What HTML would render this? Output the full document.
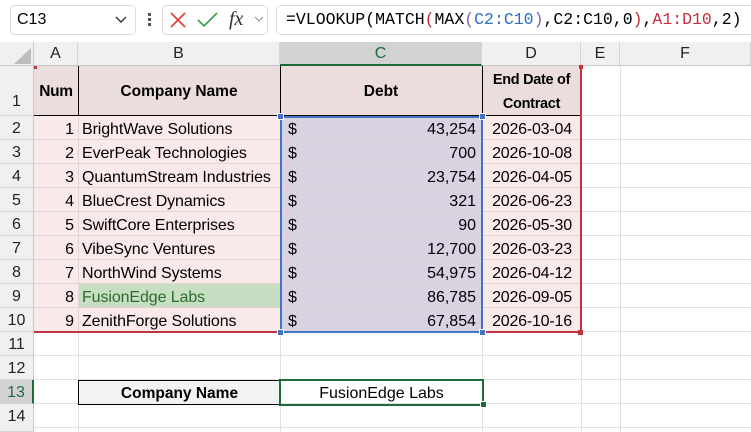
<!DOCTYPE html>
<html><head><meta charset="utf-8"><style>
*{margin:0;padding:0;box-sizing:border-box}
body{width:751px;height:432px;background:#fff;position:relative;overflow:hidden;font-family:"Liberation Sans",sans-serif;font-size:16px;color:#000}
.a{position:absolute}
.rh{position:absolute;left:0;width:34px;background:#f0f0f0;text-align:center;color:#222;font-size:16px;border-bottom:1px solid #d4d4d4;border-right:1px solid #c8c8c8}
.ch{position:absolute;top:42px;height:24px;line-height:24px;background:#f0f0f0;text-align:center;font-size:16px;border-right:1px solid #d4d4d4;border-bottom:1px solid #c8c8c8;color:#222}
.gl{position:absolute;background:#e1e1e1}
</style></head><body>
<div class="a" style="left:10px;top:5px;width:126px;height:30px;border:1px solid #dcdcdc;border-radius:5px"></div>
<div class="a" style="left:17px;top:11px;font-size:16px">C13</div>
<svg class="a" style="left:115px;top:16px" width="12" height="8"><path d="M1 1 L6 6 L11 1" stroke="#333" fill="none" stroke-width="1.4"/></svg>
<div class="a" style="left:148px;top:13px;width:3px;height:3px;background:#555"></div>
<div class="a" style="left:148px;top:18px;width:3px;height:3px;background:#555"></div>
<div class="a" style="left:148px;top:23px;width:3px;height:3px;background:#555"></div>
<div class="a" style="left:162px;top:5px;width:106px;height:30px;border:1px solid #dcdcdc;border-radius:5px"></div>
<svg class="a" style="left:170px;top:12px" width="16" height="16"><path d="M1 1 L15 15 M15 1 L1 15" stroke="#e03a3a" stroke-width="1.6"/></svg>
<svg class="a" style="left:197px;top:12px" width="22" height="16"><path d="M1 8 L7 14 L20 1" stroke="#2fa043" fill="none" stroke-width="1.6"/></svg>
<div class="a" style="left:229px;top:8px;font-family:'Liberation Serif',serif;font-style:italic;font-size:20px;color:#333">fx</div>
<svg class="a" style="left:254px;top:16px" width="10" height="7"><path d="M1 1 L5 5 L9 1" stroke="#999" fill="none" stroke-width="1.2"/></svg>
<div class="a" style="left:276px;top:5px;width:480px;height:30px;border:1px solid #dcdcdc;border-radius:5px"></div>
<div class="a" style="left:286px;top:10px;font-family:'Liberation Mono',monospace;font-size:16.5px;color:#000">=VLOOKUP(MATCH<span style="color:#c03030">(</span>MAX<span style="color:#8a5cc0">(</span><span style="color:#2e6fc4">C2:C10</span><span style="color:#8a5cc0">)</span>,C2:C10,0<span style="color:#c03030">)</span>,<span style="color:#c83040">A1:D10</span>,2)</div>
<div class="a" style="left:0;top:42px;width:34px;height:24px;background:#f0f0f0;border-right:1px solid #c8c8c8;border-bottom:1px solid #c8c8c8"></div>
<svg class="a" style="left:14px;top:48px" width="18" height="16"><path d="M17 0 L17 16 L0 16 Z" fill="#bdbdbd"/></svg>
<div class="ch" style="left:34px;width:44px">A</div>
<div class="ch" style="left:78px;width:202px">B</div>
<div class="ch" style="left:280px;width:202px;background:#d2d2d2;color:#1e6b3a;border-bottom:2px solid #1e6b3a">C</div>
<div class="ch" style="left:482px;width:99px">D</div>
<div class="ch" style="left:581px;width:39px">E</div>
<div class="ch" style="left:620px;width:131px">F</div>
<div class="rh" style="top:66px;height:50px;line-height:72px">1</div>
<div class="rh" style="top:116px;height:24px;line-height:26px">2</div>
<div class="rh" style="top:140px;height:24px;line-height:26px">3</div>
<div class="rh" style="top:164px;height:24px;line-height:26px">4</div>
<div class="rh" style="top:188px;height:24px;line-height:26px">5</div>
<div class="rh" style="top:212px;height:24px;line-height:26px">6</div>
<div class="rh" style="top:236px;height:24px;line-height:26px">7</div>
<div class="rh" style="top:260px;height:24px;line-height:26px">8</div>
<div class="rh" style="top:284px;height:24px;line-height:26px">9</div>
<div class="rh" style="top:308px;height:24px;line-height:26px">10</div>
<div class="rh" style="top:332px;height:24px;line-height:26px">11</div>
<div class="rh" style="top:356px;height:24px;line-height:26px">12</div>
<div class="rh" style="top:380px;height:24px;line-height:26px;background:#d2d2d2;color:#1e6b3a;border-right:2px solid #1e6b3a">13</div>
<div class="rh" style="top:404px;height:28px;line-height:26px">14</div>
<div class="gl" style="left:581px;top:66px;width:1px;height:366px"></div>
<div class="gl" style="left:620px;top:66px;width:1px;height:366px"></div>
<div class="gl" style="left:78px;top:332px;width:1px;height:100px"></div>
<div class="gl" style="left:280px;top:332px;width:1px;height:100px"></div>
<div class="gl" style="left:482px;top:332px;width:1px;height:100px"></div>
<div class="gl" style="left:34px;top:355px;width:717px;height:1px"></div>
<div class="gl" style="left:34px;top:379px;width:717px;height:1px"></div>
<div class="gl" style="left:34px;top:403px;width:717px;height:1px"></div>
<div class="gl" style="left:34px;top:427px;width:717px;height:1px"></div>
<div class="gl" style="left:581px;top:115px;width:170px;height:1px"></div>
<div class="gl" style="left:581px;top:139px;width:170px;height:1px"></div>
<div class="gl" style="left:581px;top:163px;width:170px;height:1px"></div>
<div class="gl" style="left:581px;top:187px;width:170px;height:1px"></div>
<div class="gl" style="left:581px;top:211px;width:170px;height:1px"></div>
<div class="gl" style="left:581px;top:235px;width:170px;height:1px"></div>
<div class="gl" style="left:581px;top:259px;width:170px;height:1px"></div>
<div class="gl" style="left:581px;top:283px;width:170px;height:1px"></div>
<div class="gl" style="left:581px;top:307px;width:170px;height:1px"></div>
<div class="gl" style="left:581px;top:331px;width:170px;height:1px"></div>
<div class="a" style="left:34px;top:66px;width:547px;height:50px;background:#ecdddd;border-bottom:1px solid #000"></div>
<div class="a" style="left:78px;top:66px;width:1px;height:50px;background:#000"></div>
<div class="a" style="left:280px;top:66px;width:1px;height:50px;background:#000"></div>
<div class="a" style="left:482px;top:66px;width:1px;height:50px;background:#000"></div>
<div class="a" style="left:34px;top:67px;width:44px;height:50px;line-height:50px;text-align:center;font-weight:bold;font-size:15.5px;letter-spacing:-0.3px">Num</div>
<div class="a" style="left:78px;top:67px;width:202px;height:50px;line-height:50px;text-align:center;font-weight:bold;font-size:15.5px">Company Name</div>
<div class="a" style="left:280px;top:67px;width:202px;height:50px;line-height:50px;text-align:center;font-weight:bold;font-size:15.5px">Debt</div>
<div class="a" style="left:482px;top:68px;width:99px;line-height:24px;text-align:center;font-weight:bold;font-size:14.5px;letter-spacing:-0.3px">End Date of<br>Contract</div>
<div class="a" style="left:34px;top:116px;width:246px;height:216px;background:#f9e9e9"></div>
<div class="a" style="left:482px;top:116px;width:99px;height:216px;background:#f9e9e9"></div>
<div class="a" style="left:280px;top:116px;width:202px;height:216px;background:#d9d2e3"></div>
<div class="a" style="left:78px;top:284px;width:202px;height:24px;background:#c6dfc2"></div>
<div class="a" style="left:78px;top:116px;width:1px;height:216px;background:#e3d3d3"></div>
<div class="a" style="left:482px;top:116px;width:1px;height:216px;background:#e3d3d3"></div>
<div class="a" style="left:34px;top:139px;width:547px;height:1px;background:#e3d3d3"></div>
<div class="a" style="left:34px;top:163px;width:547px;height:1px;background:#e3d3d3"></div>
<div class="a" style="left:34px;top:187px;width:547px;height:1px;background:#e3d3d3"></div>
<div class="a" style="left:34px;top:211px;width:547px;height:1px;background:#e3d3d3"></div>
<div class="a" style="left:34px;top:235px;width:547px;height:1px;background:#e3d3d3"></div>
<div class="a" style="left:34px;top:259px;width:547px;height:1px;background:#e3d3d3"></div>
<div class="a" style="left:34px;top:283px;width:547px;height:1px;background:#e3d3d3"></div>
<div class="a" style="left:34px;top:307px;width:547px;height:1px;background:#e3d3d3"></div>
<div class="a" style="left:34px;top:118px;width:40px;line-height:24px;text-align:right">1<br>2<br>3<br>4<br>5<br>6<br>7<br>8<br>9</div>
<div class="a" style="left:82px;top:118px;line-height:24px;white-space:nowrap;letter-spacing:-0.1px">BrightWave Solutions<br>EverPeak Technologies<br>QuantumStream Industries<br>BlueCrest Dynamics<br>SwiftCore Enterprises<br>VibeSync Ventures<br>NorthWind Systems<br><span style="color:#2e6b2e">FusionEdge Labs</span><br>ZenithForge Solutions</div>
<div class="a" style="left:288px;top:118px;line-height:24px">$<br>$<br>$<br>$<br>$<br>$<br>$<br>$<br>$</div>
<div class="a" style="left:380px;top:118px;width:96px;line-height:24px;text-align:right">43,254<br>700<br>23,754<br>321<br>90<br>12,700<br>54,975<br>86,785<br>67,854</div>
<div class="a" style="left:484px;top:118px;width:96px;line-height:24px;text-align:center;letter-spacing:-0.2px">2026-03-04<br>2026-10-08<br>2026-04-05<br>2026-06-23<br>2026-05-30<br>2026-03-23<br>2026-04-12<br>2026-09-05<br>2026-10-16</div>
<div class="a" style="left:34px;top:66px;width:548px;height:267px;border-right:2px solid #c0353f;border-bottom:2px solid #c0353f"></div>
<div class="a" style="left:34px;top:66px;width:3px;height:3px;background:#c0353f"></div>
<div class="a" style="left:579px;top:65px;width:4px;height:4px;background:#c0353f"></div>
<div class="a" style="left:578px;top:330px;width:5px;height:5px;background:#c0353f"></div>
<div class="a" style="left:280px;top:116px;width:203px;height:217px;border:2px solid #4472c4"></div>
<div class="a" style="left:278px;top:114px;width:5px;height:5px;background:#4472c4;outline:1px solid #fff"></div>
<div class="a" style="left:480px;top:114px;width:5px;height:5px;background:#4472c4;outline:1px solid #fff"></div>
<div class="a" style="left:278px;top:330px;width:5px;height:5px;background:#4472c4;outline:1px solid #fff"></div>
<div class="a" style="left:480px;top:330px;width:5px;height:5px;background:#4472c4;outline:1px solid #fff"></div>
<div class="a" style="left:78px;top:380px;width:203px;height:25px;background:#f2f2f2;border:1px solid #000;line-height:25px;text-align:center;font-weight:bold;font-size:15.5px">Company Name</div>
<div class="a" style="left:279px;top:379px;width:205px;height:27px;border:2px solid #1e6b3a;line-height:25px;text-align:center">FusionEdge Labs</div>
<div class="a" style="left:481px;top:402px;width:5px;height:5px;background:#1e6b3a;outline:1px solid #fff"></div>
</body></html>
